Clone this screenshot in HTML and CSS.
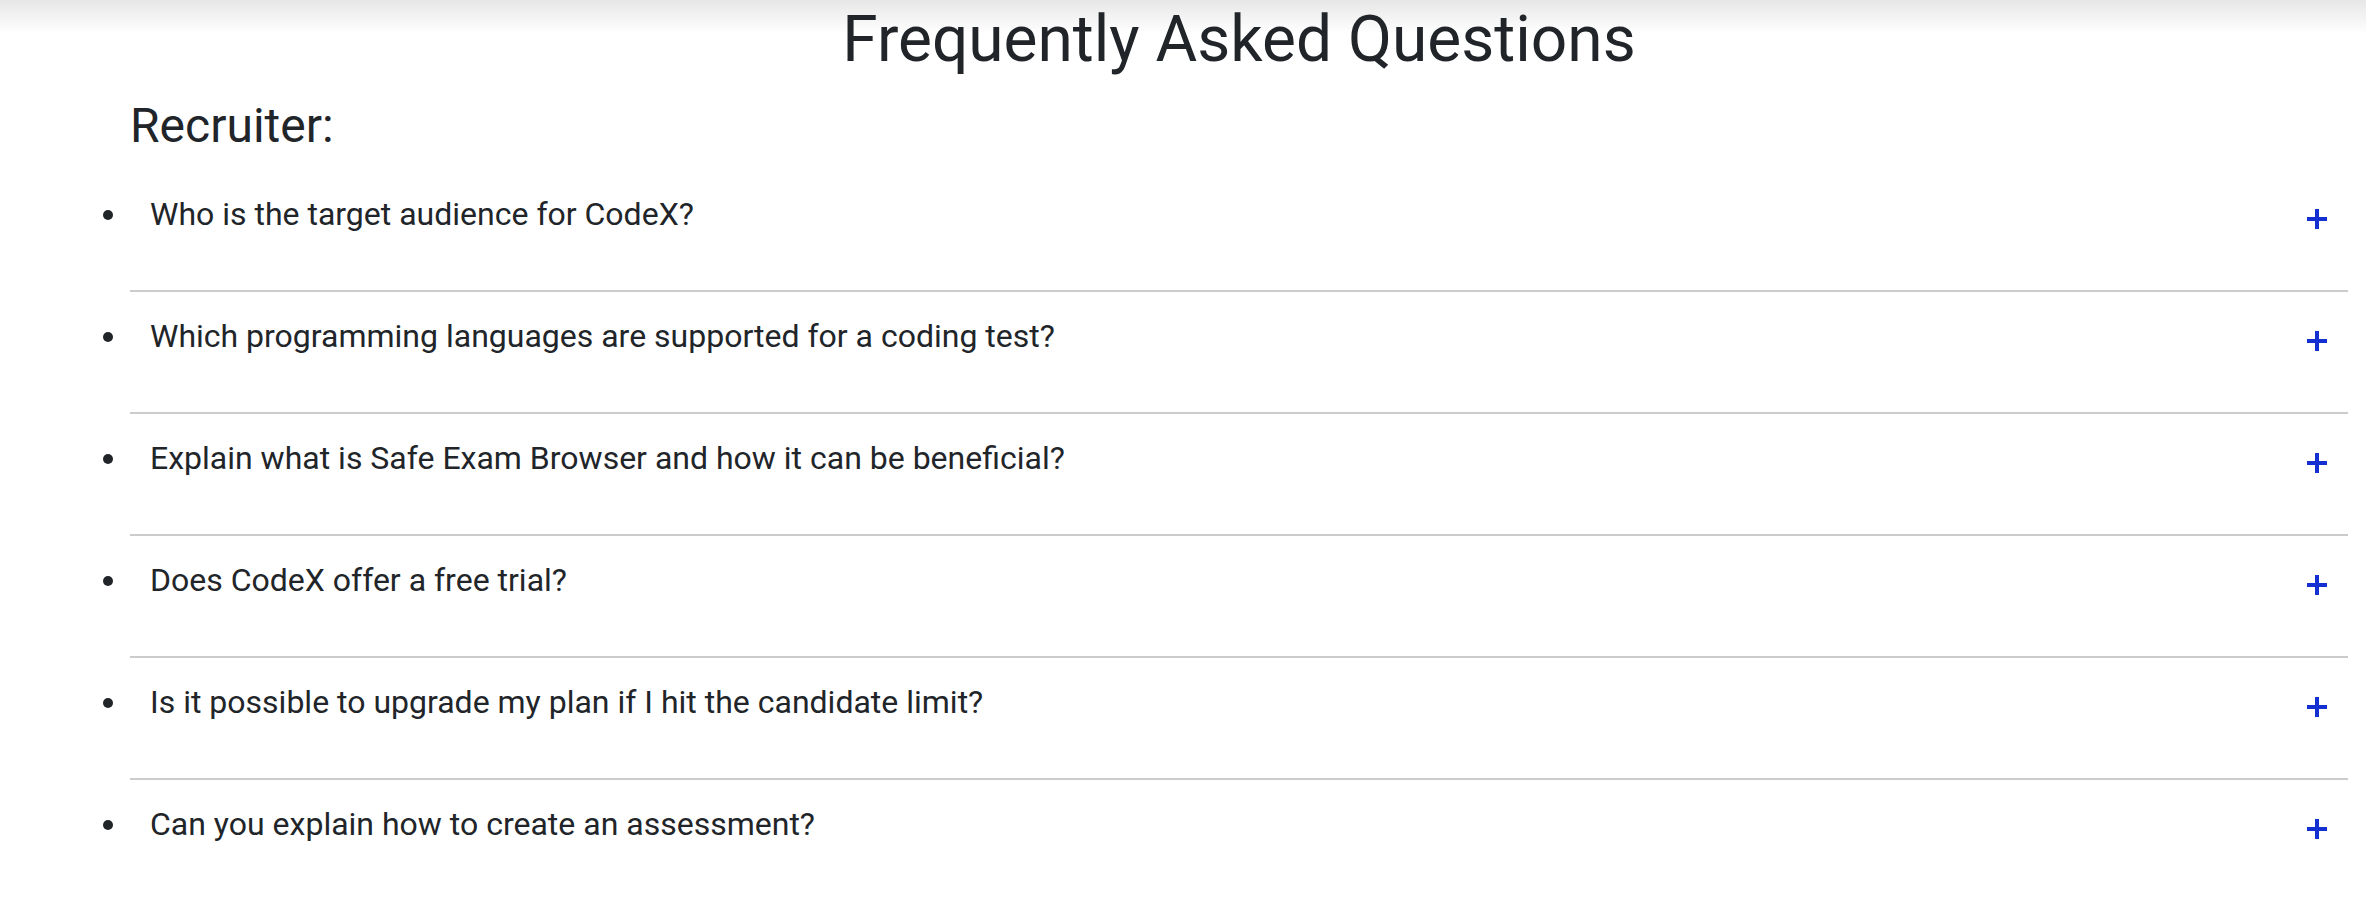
FILE: index.html
```html
<!DOCTYPE html>
<html lang="en">
<head>
  <meta charset="UTF-8" />
  <meta name="viewport" content="width=device-width, initial-scale=1.0" />
  <title>FAQ - CodeX</title>
  <link rel="stylesheet" href="styles.css">
</head>
<body>
  <section class="faq">
    <h1 class="faq-title">Frequently Asked Questions</h1>
    <h2 class="faq-group">Recruiter:</h2>

    <ul class="faq-list">
      <li class="faq-item">
        <div class="faq-question">
          <span>Who is the target audience for CodeX?</span>
          <svg class="faq-icon" viewBox="0 0 20 20"><path d="M10 0v20M0 10h20" /></svg>
        </div>
      </li>
      <li class="faq-item">
        <div class="faq-question">
          <span>Which programming languages are supported for a coding test?</span>
          <svg class="faq-icon" viewBox="0 0 20 20"><path d="M10 0v20M0 10h20" /></svg>
        </div>
      </li>
      <li class="faq-item">
        <div class="faq-question">
          <span>Explain what is Safe Exam Browser and how it can be beneficial?</span>
          <svg class="faq-icon" viewBox="0 0 20 20"><path d="M10 0v20M0 10h20" /></svg>
        </div>
      </li>
      <li class="faq-item">
        <div class="faq-question">
          <span>Does CodeX offer a free trial?</span>
          <svg class="faq-icon" viewBox="0 0 20 20"><path d="M10 0v20M0 10h20" /></svg>
        </div>
      </li>
      <li class="faq-item">
        <div class="faq-question">
          <span>Is it possible to upgrade my plan if I hit the candidate limit?</span>
          <svg class="faq-icon" viewBox="0 0 20 20"><path d="M10 0v20M0 10h20" /></svg>
        </div>
      </li>
      <li class="faq-item">
        <div class="faq-question">
          <span>Can you explain how to create an assessment?</span>
          <svg class="faq-icon" viewBox="0 0 20 20"><path d="M10 0v20M0 10h20" /></svg>
        </div>
      </li>
    </ul>
  </section>
</body>
</html>
```

FILE: styles.css
```css
body {
  margin: 0;
  font-family: Roboto, "Liberation Sans", sans-serif;
  color: #212529;
  background: #fff linear-gradient(#e7e7e7, #fff 34px) no-repeat;
}

.faq {
  padding: 0 18px 0 130px;
}

.faq-title {
  margin: 2px 0 0;
  font-size: 64px;
  font-weight: 400;
  line-height: 1.2;
  text-align: center;
}

.faq-group {
  margin: 18px 0 0;
  font-size: 48px;
  font-weight: 400;
  line-height: 1.2;
}

.faq-list {
  margin: 16px 0 0;
  padding: 0;
  list-style: disc outside;
}

.faq-item {
  font-size: 32px;
  line-height: 1.5;
  padding: 20px 0 52px;
  border-bottom: 2px solid #cccccc;
}

.faq-question {
  display: flex;
  align-items: center;
  justify-content: space-between;
  padding: 0 21px 0 20px;
  cursor: pointer;
}

.faq-icon {
  width: 20px;
  height: 20px;
  margin-top: 10px;
  stroke: #1530d0;
  stroke-width: 4;
  fill: none;
}
```
